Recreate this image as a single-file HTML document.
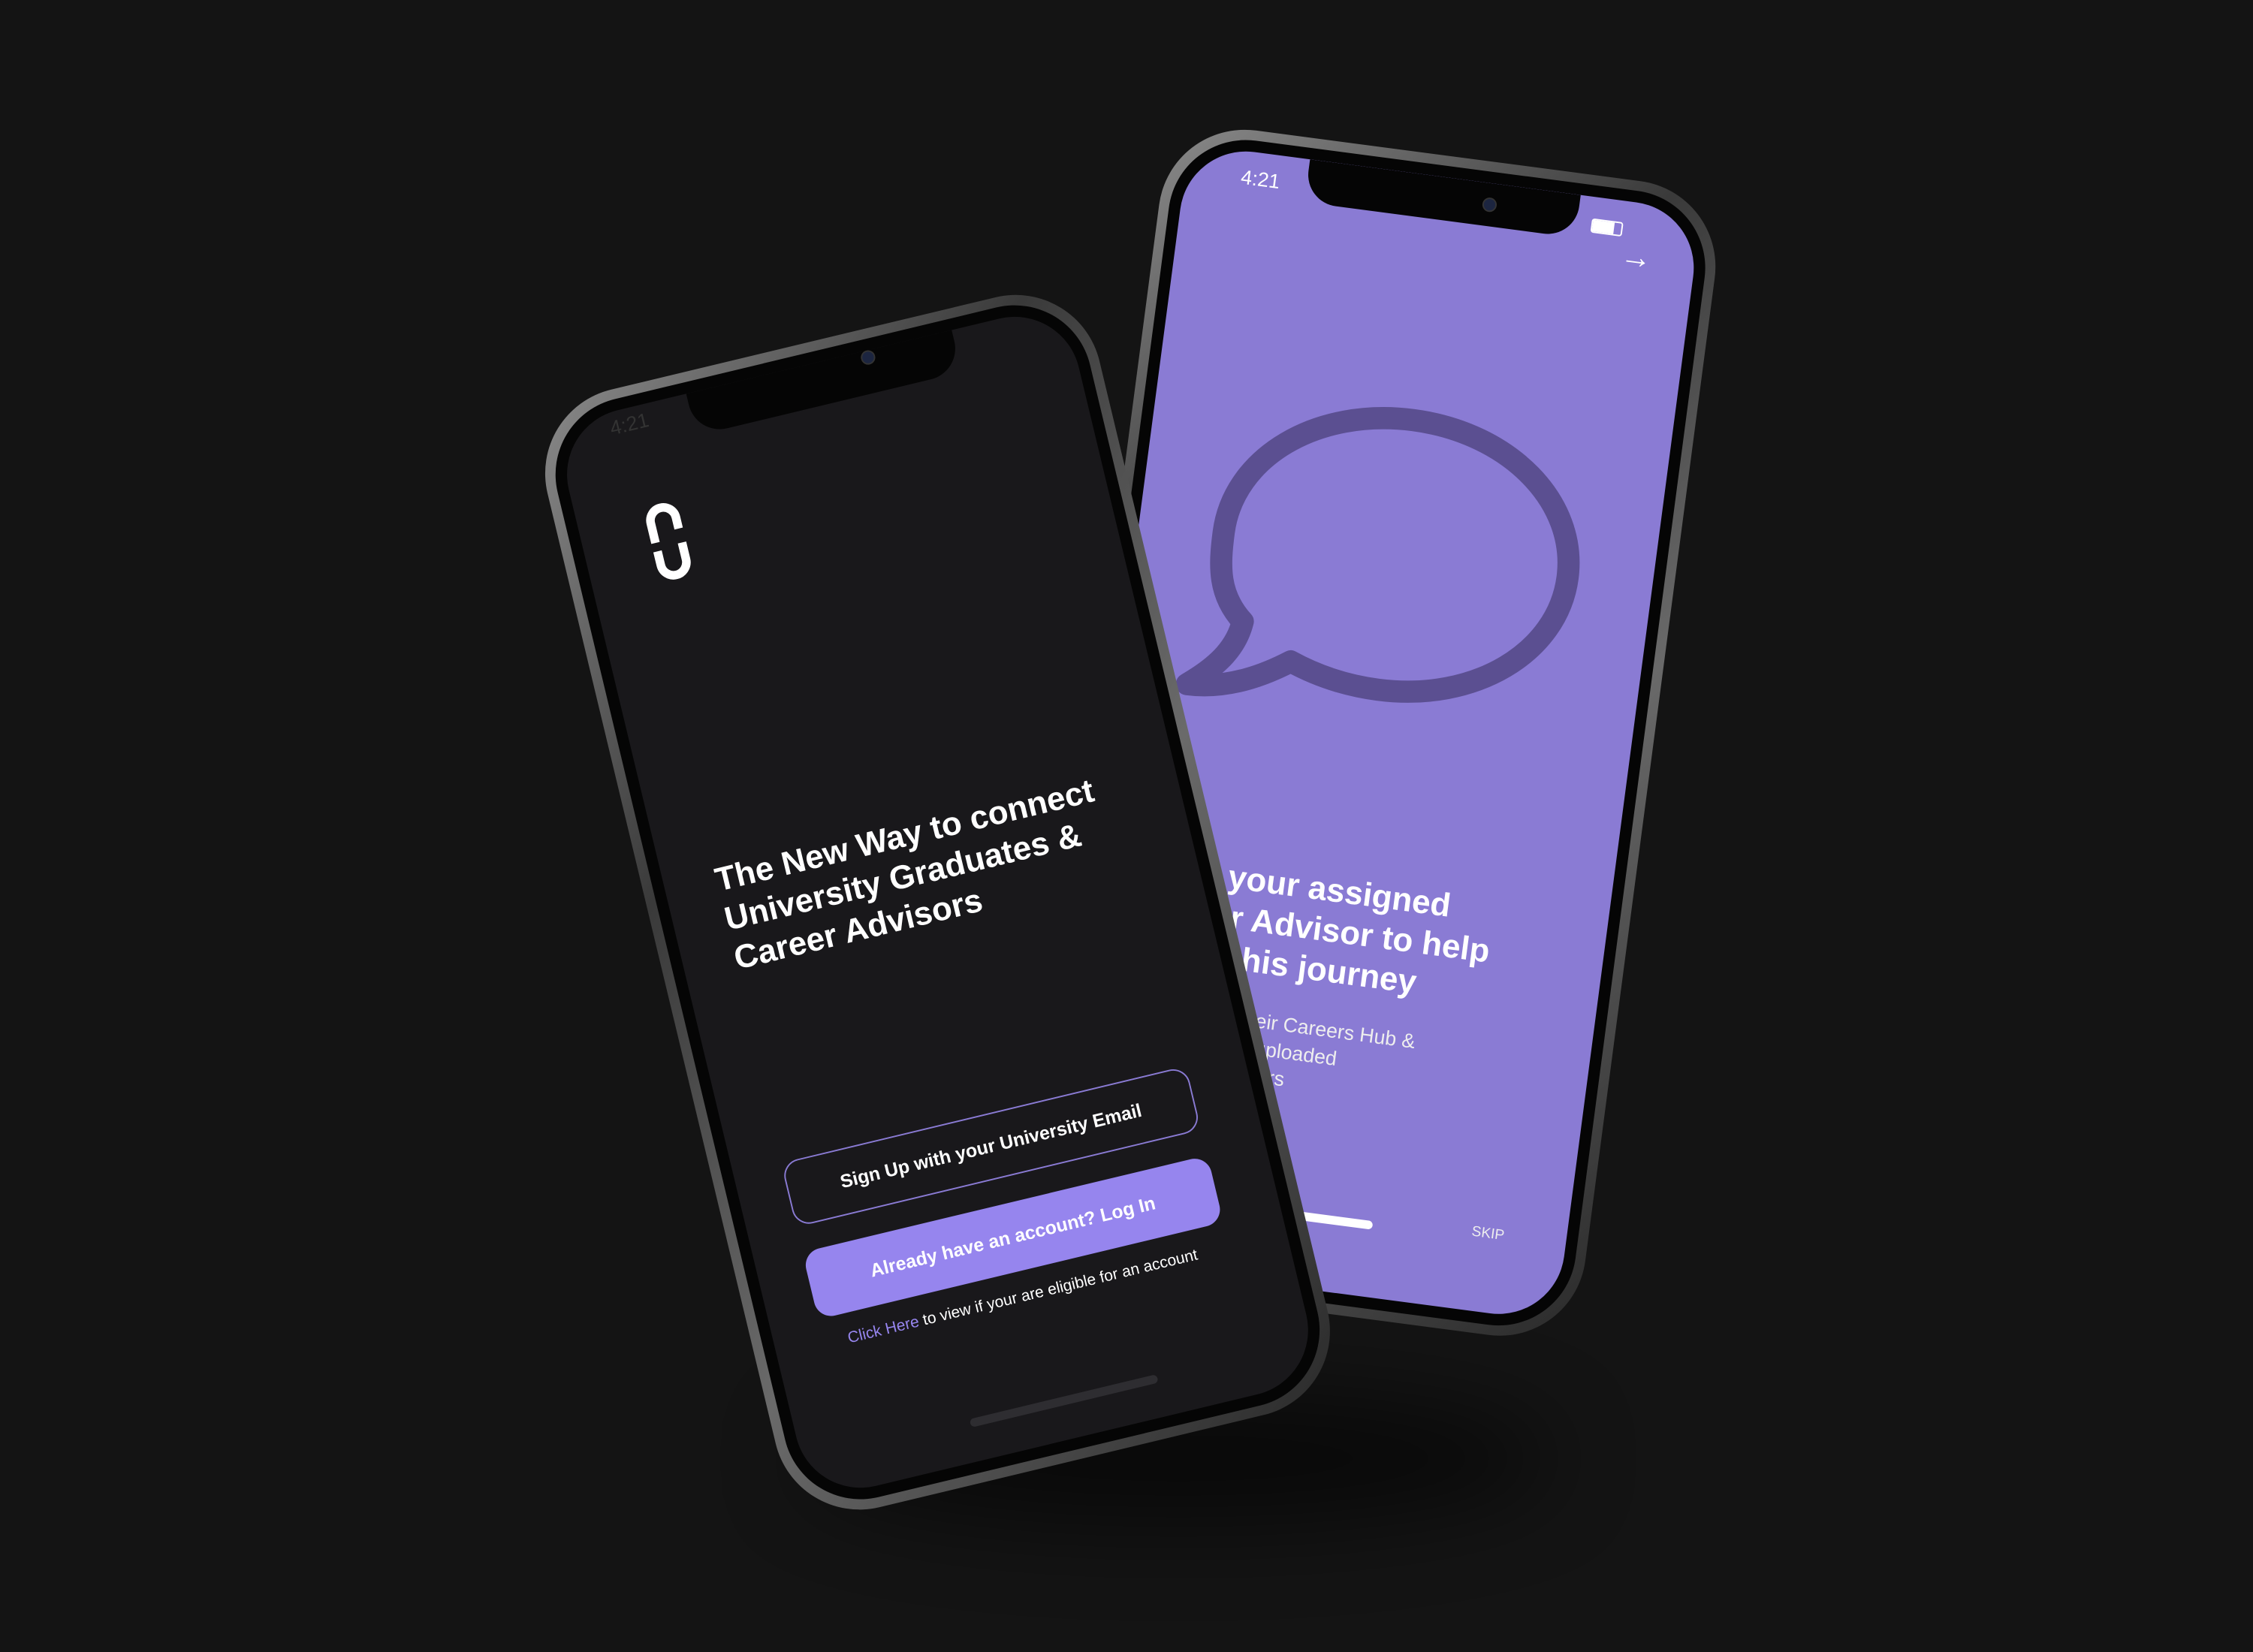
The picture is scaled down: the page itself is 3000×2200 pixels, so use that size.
<!DOCTYPE html>
<html><head><meta charset="utf-8"><style>
html,body{margin:0;padding:0;background:#141414;}
body{width:3000px;height:2200px;overflow:hidden;position:relative;font-family:"Liberation Sans",sans-serif;}
#stage{position:absolute;left:0;top:0;width:1568px;height:1150px;transform:scale(1.9133);transform-origin:0 0;}
.phone{position:absolute;border-radius:60px;background:linear-gradient(135deg,#8a8a8a,#3a3a3a 30%,#6a6a6a 60%,#2a2a2a);padding:7px;box-sizing:border-box;}
.bezel{position:absolute;inset:7px;border-radius:54px;background:#050505;}
.screen{position:absolute;inset:15px;border-radius:46px;overflow:hidden;}
.notch{position:absolute;top:0;height:30px;background:#050505;border-radius:0 0 22px 22px;}
.cam{position:absolute;width:8px;height:8px;border-radius:50%;background:#1c2540;border:1px solid #333;}
</style></head><body><div id="stage">
<div style="position:absolute;left:560px;top:970px;width:520px;height:90px;border-radius:50%;background:rgba(0,0,0,.55);filter:blur(30px)"></div>

<!-- back phone -->
<div class="phone" style="left:760px;top:105px;width:390px;height:810px;transform:rotate(7.5deg);">
 <div class="bezel"></div>
 <div class="screen" style="background:#8a7bd4;">
  <div class="notch" style="left:85px;width:190px;"></div>
  <div class="cam" style="left:208px;top:10px"></div>
  <div style="position:absolute;left:39px;top:10px;color:#fff;font-size:14px;">4:21</div>
  <div style="position:absolute;left:285px;top:15px;width:20px;height:8px;border:1px solid #fff;border-radius:2px;"><div style="width:15px;height:8px;background:#fff"></div></div>
  <div style="position:absolute;left:308px;top:25px;color:#fff;font-size:22px;">→</div>
  <svg style="position:absolute;left:40px;top:155px" width="280" height="230" viewBox="0 0 290 230">
   <path d="M145 12 C215 12 270 55 270 110 C270 165 215 208 145 208 C120 208 98 203 80 196 C60 210 35 222 8 222 C30 205 40 190 42 172 C22 155 20 135 20 110 C20 55 75 12 145 12 Z" fill="none" stroke="#5b4f91" stroke-width="16" stroke-linejoin="round"/>
  </svg>
  <div style="position:absolute;left:35px;top:488px;color:#fff;font-size:23px;font-weight:bold;line-height:28px;">Meet your assigned<br>Career Advisor to help<br>along this journey</div>
  <div style="position:absolute;left:80px;top:590px;color:#eee;font-size:14px;line-height:19px;">View their Careers Hub &amp;<br>what is uploaded<br>by advisors</div>
  <div style="position:absolute;left:150px;top:727px;width:75px;height:6px;border-radius:3px;background:#fff"></div>
  <div style="position:absolute;left:294px;top:720px;color:#eee;font-size:10px;">SKIP</div>
 </div>
</div>

<!-- front phone -->
<div class="phone" style="left:455px;top:228px;width:395px;height:800px;transform:rotate(-13.5deg);">
 <div class="bezel"></div>
 <div class="screen" style="background:#19181b;">
  <div class="notch" style="left:95px;width:190px;"></div>
  <div class="cam" style="left:219px;top:0"></div>
  <div style="position:absolute;left:38px;top:3px;color:#333;font-size:14px;">4:21</div>
  <svg style="position:absolute;left:46px;top:70px" width="26" height="54" viewBox="0 0 26 54">
   <path d="M4 26 V12 a9 9 0 0 1 18 0 V20" fill="none" stroke="#fff" stroke-width="6"/>
   <path d="M4 32 V42 a9 9 0 0 0 18 0 V30" fill="none" stroke="#fff" stroke-width="6"/>
  </svg>
  <div style="position:absolute;left:36px;top:320px;color:#fff;font-size:23px;font-weight:bold;line-height:28px;">The New Way to connect<br>University Graduates &amp;<br>Career Advisors</div>
  <div style="position:absolute;left:34px;top:536px;width:290px;height:46px;border:1.5px solid #8a7bd4;border-radius:12px;box-sizing:border-box;color:#fff;font-size:13px;font-weight:bold;text-align:center;line-height:43px;">Sign Up with your University Email</div>
  <div style="position:absolute;left:34px;top:600px;width:290px;height:48px;background:#9685ee;border-radius:12px;color:#fff;font-size:13px;font-weight:bold;text-align:center;line-height:48px;">Already have an account? Log In</div>
  <div style="position:absolute;left:26px;top:660px;width:300px;color:#fff;font-size:11px;text-align:center;"><span style="color:#9685ee">Click Here</span> to view if your are eligible for an account</div>
  <div style="position:absolute;left:120px;top:740px;width:134px;height:6px;border-radius:3px;background:#2e2d31"></div>
 </div>
</div>
</div></body></html>
